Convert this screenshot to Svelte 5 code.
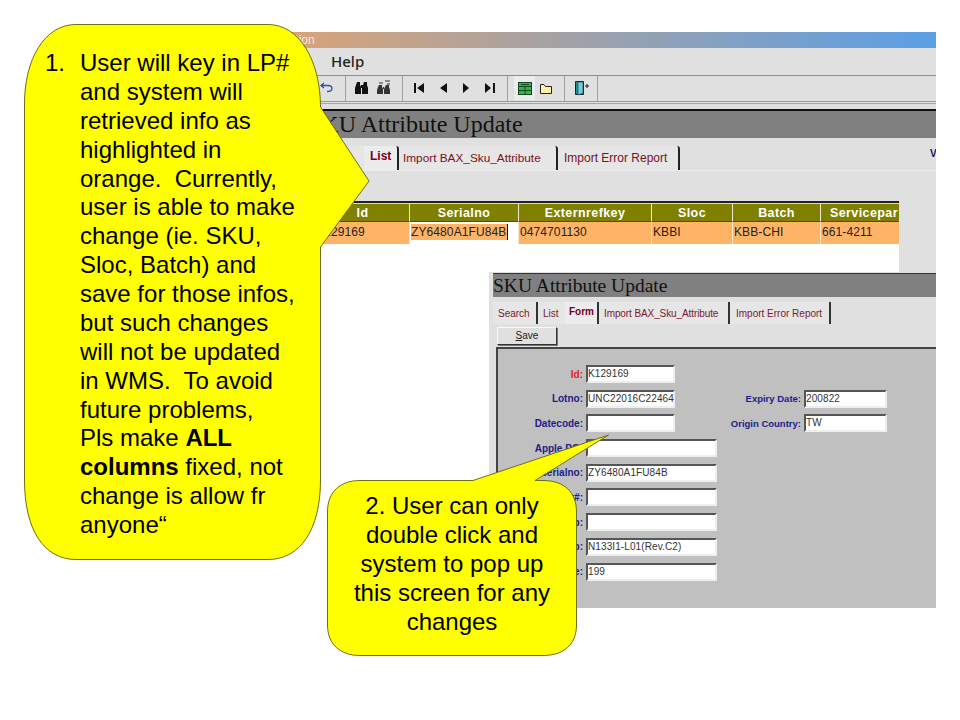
<script>
  const rows = [
    { label: 'Id:', value: 'K129169', red: true, size: 'short', extra: null },
    { label: 'Lotno:', value: 'UNC22016C22464', size: 'short', extra: ['Expiry Date:', '200822'] },
    { label: 'Datecode:', value: '', size: 'short', extra: ['Origin Country:', 'TW'] },
    { label: 'Apple PO:', value: '', size: 'long' },
    { label: 'Serialno:', value: 'ZY6480A1FU84B', size: 'long' },
    { label: 'Vendor#:', value: '', size: 'long' },
    { label: 'Group:', value: '', size: 'long' },
    { label: 'Sku Grp:', value: 'N133I1-L01(Rev.C2)', size: 'long' },
    { label: 'Price:', value: '199', size: 'long' }
  ];
  const cols = [
    { name: 'Id', cls: 'c-id', value: 'K129169' },
    { name: 'Serialno', cls: 'c-serial', value: 'ZY6480A1FU84B', edit: true },
    { name: 'Externrefkey', cls: 'c-ext', value: '0474701130' },
    { name: 'Sloc', cls: 'c-sloc', value: 'KBBI' },
    { name: 'Batch', cls: 'c-batch', value: 'KBB-CHI' },
    { name: 'Servicepar', cls: 'c-serv', value: '661-4211' }
  ];
</script>

<main class="slide">
  <section class="win win1">
    <div class="titlebar"><span>Application</span></div>
    <div class="menu"><span>Help</span></div>
    <div class="toolbar">
      <svg class="tb" width="310" height="25" viewBox="0 0 310 25">
        <path d="M34 7 l-3 2.500 3 2.500 M31 9.500 h7 q4 0 4 3 q0 3-5 3" fill="none" stroke="#2f4fa8" stroke-width="1.300"/>
        <path d="M55.500 0v25M112.500 0v25M217.500 0v25M274.500 0v25M307.500 0v25" stroke="#a0a0a0"/>
        <g fill="#111">
          <path d="M67 6h3v3l1 2v7h-6v-6l1-3zM74 6h3v3l1 3v6h-6v-7l1-2zM71 9h2v3h-2z"/>
          <path d="M89 9h3v2l1 2v5h-6v-4l1-3zM96 9h3v2l1 3v4h-6v-5l1-2zM93 11h1v2h-1z" fill="#333"/>
          <path d="M89 7h4M95 5h5M97 8h3" stroke="#333" fill="none"/>
          <path d="M124 7h2v10h-2zM134 7v10l-7-5zM157 7v10l-7-5zM173 7l6 5-6 5zM195 7l6 5-6 5zM203 7h2v10h-2z"/>
        </g>
        <rect x="224" y="0" width="21" height="24" fill="#ececec"/>
        <rect x="228.500" y="6.500" width="13" height="12" fill="#36b24a" stroke="#0d4a20"/>
        <path d="M229 10.500h12M229 14.500h12M235 11v7M231 8.500h8" stroke="#0d4a20"/>
        <path d="M250.500 8.500v9h11v-7h-6l-1.500-2z" fill="#fdf3a0" stroke="#222"/>
        <path d="M285.500 5.500h8v13h-8z" fill="#1f8f8f" stroke="#124"/>
        <path d="M288 6v13l5-2V6z" fill="#6fd0d0" stroke="#124" stroke-width=".5"/>
        <path d="M295 10h4M297 8v4" stroke="#222"/>
      </svg>
    </div>
    <div class="tbgap"></div>
    <h1 class="wtitle">SKU Attribute Update</h1>
    <nav class="tabs">
      <span class="tab t-search">Search</span>
      <span class="tab on t-list">List</span>
      <span class="tab t-bax">Import BAX_Sku_Attribute</span>
      <span class="tab t-err">Import Error Report</span>
      <b class="v">V</b>
    </nav>
    <div class="tablearea">
      <div class="table">
        <div class="thead">
          {#each cols as c}<div class="th {c.cls}">{c.name}</div>{/each}
        </div>
        <div class="trow">
          {#each cols as c}
            <div class="td {c.cls}" class:edit={c.edit}>
              {#if c.edit}<span class="sel">{c.value}</span>{:else}{c.value}{/if}
            </div>
          {/each}
        </div>
      </div>
    </div>
  </section>

  <section class="win win2">
    <h2 class="wtitle2">SKU Attribute Update</h2>
    <nav class="tabs2">
      <span class="tab2 s1">Search</span>
      <span class="tab2 s2">List</span>
      <span class="tab2 s3 on2">Form</span>
      <span class="tab2 s4">Import BAX_Sku_Attribute</span>
      <span class="tab2 s5">Import Error Report</span>
    </nav>
    <div class="savebar"><button class="save"><u>S</u>ave</button></div>
    <div class="panel">
      {#each rows as r}
        <div class="frow">
          <label class="lbl" class:red={r.red}>{r.label}</label>
          <div class="inp {r.size}">{r.value}</div>
          {#if r.extra}
            <label class="lbl lbl2">{r.extra[0]}</label>
            <div class="inp ex">{r.extra[1]}</div>
          {/if}
        </div>
      {/each}
    </div>
  </section>

  <aside class="callout c1">
    <svg width="348" height="538" viewBox="24 24 348 538">
      <path d="M76 24.500H268C300 24.500 320.500 62 320.500 107L369 181 320.500 247V480C320.500 530 300 559.500 268 559.500H76C44 559.500 24.500 530 24.500 480V104C24.500 60 44 24.500 76 24.500Z" fill="#ffff00" stroke="#6e6e14"/>
    </svg>
    <div class="txt1">
      <span class="num">1.</span>
      <p>User will key in LP#<br>and system will<br>retrieved info as<br>highlighted in<br>orange.&nbsp; Currently,<br>user is able to make<br>change (ie. SKU,<br>Sloc, Batch) and<br>save for those infos,<br>but such changes<br>will not be updated<br>in WMS.&nbsp; To avoid<br>future problems,<br>Pls make <b>ALL</b><br><b>columns</b> fixed, not<br>change is allow fr<br>anyone“</p>
    </div>
  </aside>

  <aside class="callout c2">
    <svg width="284" height="224" viewBox="326 434 284 224">
      <path d="M360 480.500H473L608.500 435 535 480.500H543C564 480.500 576.500 492 576.500 512V625C576.500 644 564 655.500 543 655.500H360C340 655.500 327.500 644 327.500 625V512C327.500 492 340 480.500 360 480.500Z" fill="#ffff00" stroke="#6e6e14"/>
    </svg>
    <p class="txt2">2. User can only<br>double click and<br>system to pop up<br>this screen for any<br>changes</p>
  </aside>
</main>

<style>
  :global(body) { margin: 0; background: #fff; }
  .slide { position: relative; width: 960px; height: 720px; overflow: hidden; background: #fff; font-family: "Liberation Sans", Arial, sans-serif; color: #000; }

  .win { position: absolute; overflow: hidden; background: #e0e0e0; }
  .win1 { left: 250px; top: 32px; width: 686px; height: 240px; }
  .titlebar { height: 16px; background: linear-gradient(90deg, #d8a478 6%, #5a9fe6); color: #f4e8dc; font-size: 12px; line-height: 16px; }
  .titlebar span { display: block; padding-left: 6px; white-space: nowrap; }
  .menu { height: 28px; box-sizing: border-box; border-bottom: 1px solid #8e8e8e; font: 500 15px/26px "Noto Sans", sans-serif; padding-left: 81px; color: #222; }
  .toolbar { height: 26px; box-sizing: border-box; border-bottom: 1px solid #9a9a9a; padding-left: 40px; }
  .tb { display: block; }
  .tbgap { height: 7px; box-sizing: border-box; padding-top: 1px; }
  .tbgap::before { content: ""; display: block; height: 1px; background: #a6a6a6; }
  .wtitle { margin: 0; height: 29px; box-sizing: border-box; border-top: 2px solid #111; background: #808080; font: 400 24px/27px "Liberation Serif", serif; color: #111; padding-left: 58px; white-space: nowrap; }
  .tabs { display: flex; height: 24px; margin-top: 8px; font-size: 12px; position: relative; border-bottom: 1px solid #ececec; color: #7a1020; }
  .tab { box-sizing: border-box; height: 24px; line-height: 24px; background: #e6e6e6; border-right: 2px solid #222; border-radius: 0 3px 0 0; white-space: nowrap; }
  .tab.on { font-weight: 700; line-height: 20px; color: #7a0018; background: #ececec; }
  .t-search { width: 114px; padding-left: 64px; border-right: 0; }
  .t-list { width: 35px; padding-left: 6px; }
  .t-bax { width: 159px; padding-left: 4px; font-size: 11.800px; }
  .t-err { width: 122px; padding-left: 6px; }
  .v { position: absolute; left: 680px; top: 2px; color: #101070; font-size: 10px; }
  .tablearea { margin: 30px 37px 0 64px; height: 71px; background: #fff; }
  .table { border-top: 2px solid #222; padding-top: 1px; background: #dcdcc8; overflow: hidden; }
  .thead, .trow { display: flex; }
  .th, .td { box-sizing: border-box; flex: none; border-right: 1px solid #f4e8c8; white-space: nowrap; }
  .th { height: 18px; background: #808000; color: #fff; font: 700 12.500px/18px "Liberation Sans", sans-serif; letter-spacing: .4px; text-align: center; border-bottom: 1px solid #4e4e00; }
  .td { height: 22px; background: #ffb366; font-size: 12px; letter-spacing: .1px; line-height: 21px; padding-left: 1px; color: #222; }
  .c-id { width: 96px; padding-left: 2px; }
  .c-serial { width: 109px; }
  .c-ext { width: 133px; }
  .c-sloc { width: 81px; }
  .c-batch { width: 88px; }
  .c-serv { width: 78px; border-right: 0; }
  .th.c-serv { text-align: left; padding-left: 9px; }
  .td.edit { background: #fff; padding: 2px 0 0 1px; line-height: 16px; }
  .sel { display: inline-block; background: #ffb366; padding-right: 1px; border-right: 1px solid #112; }

  .win2 { left: 489px; top: 272px; width: 447px; height: 336px; }
  .wtitle2 { margin: 1px 0 0 4px; height: 24px; box-sizing: border-box; border-top: 1px solid #333; background: #808080; font: 400 19.500px/23px "Liberation Serif", serif; color: #111; white-space: nowrap; }
  .tabs2 { display: flex; height: 22px; margin: 5px 0 0 4px; font-size: 10px; color: #7a1830; }
  .tab2 { box-sizing: border-box; height: 22px; line-height: 24px; background: #e6e6e6; white-space: nowrap; border-right: 2px solid #333; padding-left: 5px; }
  .s1 { width: 45px; }
  .s2 { width: 27px; border-right: 0; }
  .s3 { width: 34px; padding-left: 4px; }
  .on2 { font-weight: 700; line-height: 20px; color: #70001c; background: #ececec; }
  .s4 { width: 131px; padding-left: 5px; letter-spacing: -.1px; }
  .s5 { width: 101px; padding-left: 6px; }
  .savebar { height: 23px; padding: 3px 0 0 8px; box-sizing: border-box; }
  .save { display: block; width: 60px; height: 18px; padding: 0 0 2px; background: #e0e0e0; border: 1px solid; border-color: #f8f8f8 #333 #333 #f8f8f8; box-shadow: 1px 1px 0 #777; font: 10px "Liberation Sans", sans-serif; color: #222; }
  .panel { margin: 0 0 0 7px; height: 262px; box-sizing: border-box; background: #c0c0c0; border-top: 2px solid #444; border-left: 2px solid #444; padding-top: 16px; display: flex; flex-direction: column; gap: 6.700px; }
  .frow { display: flex; height: 18px; align-items: center; }
  .lbl { width: 88px; text-align: right; font: 700 10px "Liberation Sans", sans-serif; color: #1c1c8a; white-space: nowrap; padding-right: 3px; box-sizing: border-box; }
  .lbl.red { color: #e02424; }
  .lbl2 { width: 129px; font-size: 9.500px; }
  .inp { box-sizing: border-box; height: 18px; background: #fff; border: 2px solid; border-color: #555 #eee #eee #555; font-size: 10px; letter-spacing: .1px; line-height: 14px; color: #333; white-space: nowrap; }
  .short { width: 89px; }
  .long { width: 131px; }
  .ex { width: 83px; }

  .callout { position: absolute; }
  .callout svg { position: absolute; left: 0; top: 0; display: block; }
  .c1 { left: 24px; top: 24px; width: 348px; height: 538px; }
  .txt1 { position: relative; display: flex; padding: 25px 0 0 21px; font-size: 24px; line-height: 28.880px; }
  .num { width: 35px; flex: none; }
  .txt1 p { margin: 0; white-space: nowrap; }
  .c2 { left: 326px; top: 434px; width: 284px; height: 224px; }
  .txt2 { position: relative; width: 252px; margin: 0; padding: 57px 0 0 0; font-size: 24px; line-height: 29px; text-align: center; white-space: nowrap; }
</style>
